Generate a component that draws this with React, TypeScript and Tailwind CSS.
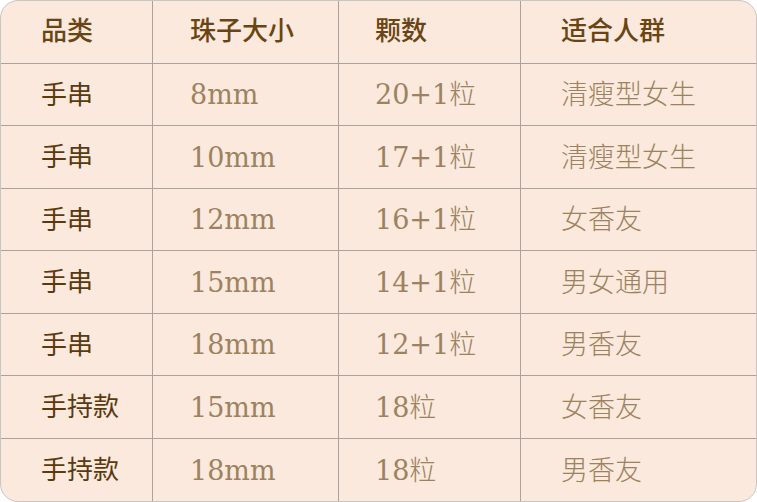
const headers = ["品类", "珠子大小", "颗数", "适合人群"];

const rows = [
  ["手串", "8mm", "20+1粒", "清瘦型女生"],
  ["手串", "10mm", "17+1粒", "清瘦型女生"],
  ["手串", "12mm", "16+1粒", "女香友"],
  ["手串", "15mm", "14+1粒", "男女通用"],
  ["手串", "18mm", "12+1粒", "男香友"],
  ["手持款", "15mm", "18粒", "女香友"],
  ["手持款", "18mm", "18粒", "男香友"],
];

const pads = ["pl-[40px]", "pl-[37px]", "pl-[36px]", "pl-[40px]"];

export default function App() {
  return (
    <div className="w-[757px] h-[502px] bg-white">
      <div
        className="w-[757px] h-[502px] rounded-[18px] border border-[#c9c5c1] bg-[#fae9dc] overflow-hidden grid grid-cols-[152px_186px_182px_1fr] grid-rows-8"
        style={{ fontFamily: '"DejaVu Serif", "Noto Sans CJK SC", serif' }}
      >
        {headers.map((h, i) => (
          <div
            key={h}
            className={`flex items-center ${pads[i]} border-b border-[#aaa39d] ${i < 3 ? "border-r" : ""} text-[26px] font-medium text-[#6a4513]`}
          >
            {h}
          </div>
        ))}
        {rows.map((r, ri) =>
          r.map((c, ci) => (
            <div
              key={`${ri}-${ci}`}
              className={`flex items-center ${pads[ci]} pt-[2px] border-[#aaa39d] ${ri < rows.length - 1 ? "border-b" : ""} ${ci < 3 ? "border-r" : ""} ${ci === 0 ? "text-[26px] text-[#5a3a0e]" : "text-[27px] text-[#9c8260] font-light"}`}
            >
              {c}
            </div>
          ))
        )}
      </div>
    </div>
  );
}
